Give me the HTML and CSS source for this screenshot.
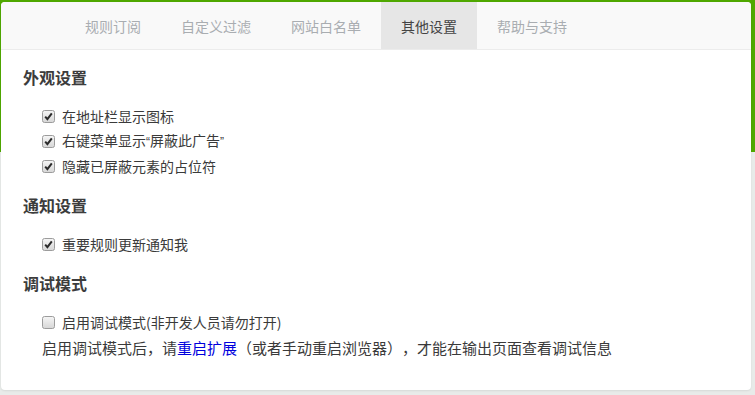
FILE: index.html
```html
<!DOCTYPE html>
<html lang="zh-CN">
<head>
<meta charset="utf-8">
<title>其他设置</title>
<link rel="stylesheet" href="styles.css">
</head>
<body>
<div class="card">
  <nav class="tabs">
    <a class="tab">规则订阅</a>
    <a class="tab">自定义过滤</a>
    <a class="tab">网站白名单</a>
    <a class="tab active">其他设置</a>
    <a class="tab">帮助与支持</a>
  </nav>
  <div class="content">
    <section class="section first">
      <h3 class="title">外观设置</h3>
      <label class="row"><span class="box checked"><svg width="13" height="13" viewBox="0 0 13 13"><rect x="0.5" y="0.5" width="12" height="12" rx="2" fill="url(#g)" stroke="#9c9c9c"/><path d="M3.2 6.6 L5.4 9.2 L9.8 3.4" fill="none" stroke="#2b2b2b" stroke-width="2"/></svg></span><span class="label">在地址栏显示图标</span></label>
      <label class="row"><span class="box checked"><svg width="13" height="13" viewBox="0 0 13 13"><rect x="0.5" y="0.5" width="12" height="12" rx="2" fill="url(#g)" stroke="#9c9c9c"/><path d="M3.2 6.6 L5.4 9.2 L9.8 3.4" fill="none" stroke="#2b2b2b" stroke-width="2"/></svg></span><span class="label">右键菜单显示<span class="q">“</span>屏蔽此广告<span class="q">”</span></span></label>
      <label class="row"><span class="box checked"><svg width="13" height="13" viewBox="0 0 13 13"><rect x="0.5" y="0.5" width="12" height="12" rx="2" fill="url(#g)" stroke="#9c9c9c"/><path d="M3.2 6.6 L5.4 9.2 L9.8 3.4" fill="none" stroke="#2b2b2b" stroke-width="2"/></svg></span><span class="label">隐藏已屏蔽元素的占位符</span></label>
    </section>
    <section class="section">
      <h3 class="title">通知设置</h3>
      <label class="row"><span class="box checked"><svg width="13" height="13" viewBox="0 0 13 13"><rect x="0.5" y="0.5" width="12" height="12" rx="2" fill="url(#g)" stroke="#9c9c9c"/><path d="M3.2 6.6 L5.4 9.2 L9.8 3.4" fill="none" stroke="#2b2b2b" stroke-width="2"/></svg></span><span class="label">重要规则更新通知我</span></label>
    </section>
    <section class="section">
      <h3 class="title">调试模式</h3>
      <label class="row"><span class="box"><svg width="13" height="13" viewBox="0 0 13 13"><rect x="0.5" y="0.5" width="12" height="12" rx="2" fill="url(#g)" stroke="#9c9c9c"/></svg></span><span class="label">启用调试模式(非开发人员请勿打开)</span></label>
      <p class="desc">启用调试模式后，请<a class="link">重启扩展</a>（或者手动重启浏览器），才能在输出页面查看调试信息</p>
    </section>
  </div>
</div>
<svg width="0" height="0" class="defs"><defs><linearGradient id="g" x1="0" y1="0" x2="0" y2="1"><stop offset="0" stop-color="#f6f6f6"/><stop offset="1" stop-color="#d6d6d6"/></linearGradient></defs></svg>
</body>
</html>
```

FILE: styles.css
```css
html, body {
  margin: 0;
  padding: 0;
}
body {
  width: 755px;
  height: 395px;
  overflow: hidden;
  background: linear-gradient(to bottom, #4fa800 0, #4fa800 152px, #e8ebe9 152px, #e8ebe9 100%);
  font-family: "Noto Sans CJK SC", "Noto Sans", sans-serif;
  color: #3a3a3a;
  font-size: 14px;
}
.defs {
  position: absolute;
}
.card {
  margin: 2px 4px 0 1px;
  height: 388px;
  background: #ffffff;
  border-radius: 4px;
  box-shadow: 0 1px 2px rgba(0, 0, 0, 0.08);
  box-sizing: border-box;
}
.tabs {
  display: flex;
  height: 47px;
  padding-left: 64px;
  background: #f9f9f9;
  border-bottom: 1px solid #ececec;
  border-radius: 4px 4px 0 0;
}
.tab {
  display: flex;
  align-items: center;
  padding: 0 20px;
  font-size: 14px;
  line-height: 20px;
  color: #a9adb1;
  cursor: pointer;
}
.tab.active {
  background: #e6e6e6;
  color: #444444;
}
.content {
  padding: 0 22px;
}
.section {
  margin-top: 16px;
}
.section.first {
  margin-top: 17px;
}
.title {
  margin: 0 0 17px 0;
  font-size: 16px;
  line-height: 20px;
  font-weight: bold;
  color: #3c3c3c;
}
.row {
  display: flex;
  align-items: center;
  height: 25px;
  padding-left: 19px;
}
.box {
  display: flex;
  width: 13px;
  height: 13px;
  margin-right: 7px;
}
.label {
  line-height: 25px;
  color: #3a3a3a;
}
.q {
  font-family: "Liberation Sans", sans-serif;
  font-size: 12px;
}
.desc {
  margin: 0;
  padding-left: 19px;
  font-size: 15px;
  line-height: 25px;
  color: #3a3a3a;
  text-spacing-trim: space-all;
}
.link {
  color: #0000dd;
  cursor: pointer;
}
```
